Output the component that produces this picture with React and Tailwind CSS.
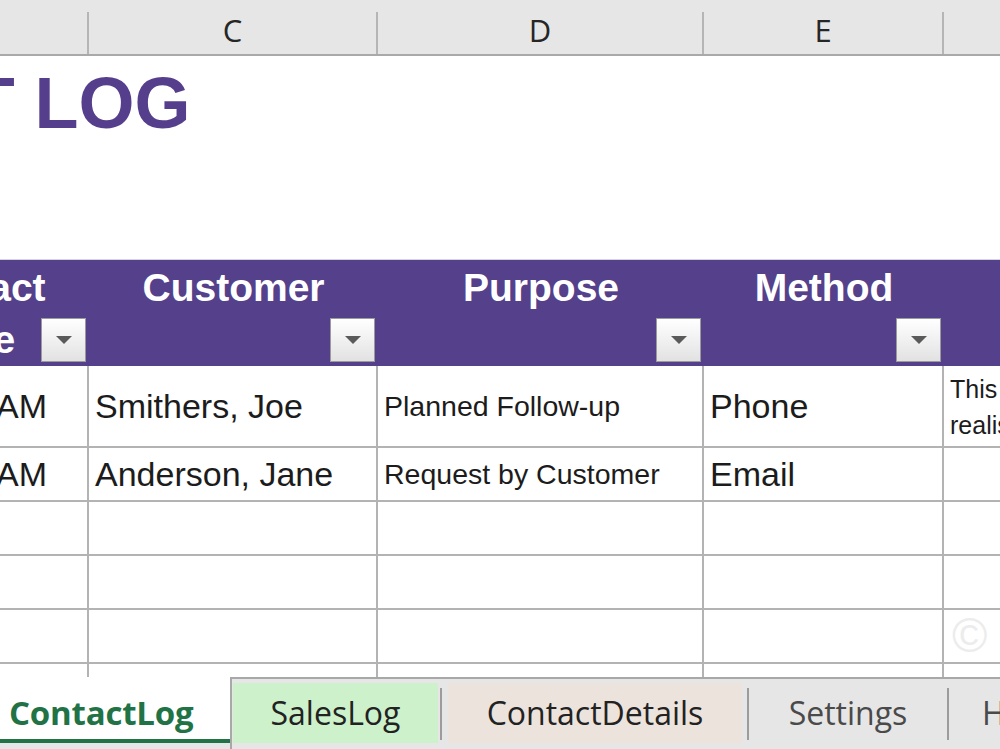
import React from 'react';

const columns = [
  { letter: 'B', width: 'w-[202px] ml-[-113px]', title: ['Contact', 'Date'], pad: 'pr-[30px]' },
  { letter: 'C', width: 'w-[289px]', title: ['Customer', ''], pad: '' },
  { letter: 'D', width: 'w-[326px]', title: ['Purpose', ''], pad: '' },
  { letter: 'E', width: 'w-[240px]', title: ['Method', ''], pad: '' },
  { letter: 'F', width: 'w-[300px]', title: ['Notes', ''], pad: '', noFilter: true },
];

const rows = [
  { h: 'h-[82px]', time: '10:00 AM', customer: 'Smithers, Joe', purpose: 'Planned Follow-up', method: 'Phone', notes: true },
  { h: 'h-[54px]', time: '11:30 AM', customer: 'Anderson, Jane', purpose: 'Request by Customer', method: 'Email' },
  { h: 'h-[54px]' },
  { h: 'h-[54px]' },
  { h: 'h-[54px]', mark: true },
  { h: 'h-[54px]' },
];

const FilterButton = () => (
  <div className="absolute right-[3px] bottom-[4px] w-[45px] h-[44px] border border-[#9b9b9b] bg-gradient-to-b from-white to-[#e2e2e2] flex items-center justify-center">
    <svg width="18" height="10" viewBox="0 0 18 10">
      <polygon points="1,1 17,1 9,9" fill="#5a5a5a" />
    </svg>
  </div>
);

const cell = 'border-r-2 border-b-2 border-[#b3b3b3] shrink-0 flex items-center overflow-hidden whitespace-nowrap';

export default function App() {
  return (
    <div className="w-[1000px] h-[749px] overflow-hidden bg-white flex flex-col" style={{ fontFamily: '"Liberation Sans", Arial, sans-serif' }}>
      {/* column letters */}
      <div className="h-[56px] shrink-0 bg-[#e6e6e6] border-b-2 border-[#a9a9a9] flex items-end">
        {columns.map((c) => (
          <div
            key={c.letter}
            className={`${c.width} h-[42px] shrink-0 border-r-2 border-[#b5b5b5] flex items-start justify-center`}
          >
            {c.letter !== 'B' && (
              <span className="text-[31px] leading-[40px] text-[#262626] -mt-[2px]" style={{ fontFamily: '"Open Sans", sans-serif' }}>
                {c.letter}
              </span>
            )}
          </div>
        ))}
      </div>

      {/* sheet */}
      <div className="flex-1 overflow-hidden flex flex-col">
        <div className="h-[203px] shrink-0">
          <div className="ml-[-332px] mt-[11px] whitespace-nowrap text-[72px] leading-none font-bold text-[#553f8c]">
            CONTACT LOG
          </div>
        </div>

        {/* table header */}
        <div className="h-[107px] shrink-0 flex bg-[#55408b] border-t border-[#d8d2e6]">
          {columns.map((c) => (
            <div key={c.letter} className={`${c.width} shrink-0 relative`}>
              <div className={`flex flex-col items-center pt-[2px] text-[39px] leading-[52px] font-bold text-white whitespace-nowrap ${c.pad}`}>
                <span>{c.title[0]}</span>
                <span>{c.title[1]}</span>
              </div>
              {!c.noFilter && <FilterButton />}
            </div>
          ))}
        </div>

        {/* data rows */}
        {rows.map((r, i) => (
          <div key={i} className={`${r.h} shrink-0 flex text-[#1c1c1c]`}>
            <div className={`${cell} w-[202px] ml-[-113px] justify-end pr-[40px] text-[34px]`}>{r.time}</div>
            <div className={`${cell} w-[289px] pl-[6px] text-[34px]`}>{r.customer}</div>
            <div className={`${cell} w-[326px] pl-[6px] text-[28.5px]`}>{r.purpose}</div>
            <div className={`${cell} w-[240px] pl-[6px] text-[34px]`}>{r.method}</div>
            <div className={`border-b-2 border-[#b3b3b3] w-[300px] shrink-0 overflow-hidden pl-[6px]`}>
              {r.notes && (
                <div className="pt-[5px] text-[25px] leading-[36px] whitespace-nowrap">
                  <div>This is an example note,</div>
                  <div>realistic text goes here</div>
                </div>
              )}
              {r.mark && (
                <div className="h-full flex items-center pl-[2px] text-[48px] text-[#ececec]">©</div>
              )}
            </div>
          </div>
        ))}
      </div>

      {/* sheet tabs */}
      <div className="h-[72px] shrink-0 bg-[#e6e6e6] flex items-start" style={{ fontFamily: '"Open Sans", sans-serif' }}>
        <div className="w-[232px] h-[66px] shrink-0 bg-white border-b-4 border-[#217346] flex items-center pt-[10px] pl-[9px] text-[33px] font-bold text-[#217346] tracking-[-0.2px]">
          ContactLog
        </div>
        <div className="flex-1 h-full border-t-2 border-l-2 border-[#a8a8a8] -ml-[2px] flex items-start pt-[4px] text-[32px]">
          <div className="w-[205px] h-[60px] shrink-0 ml-[1px] bg-[#cdf1cb] flex items-center justify-center text-[#222]">SalesLog</div>
          <div className="w-[2px] h-[52px] mt-[5px] ml-[2px] bg-[#9c9c9c] shrink-0" />
          <div className="w-[294px] h-[60px] shrink-0 ml-[6px] bg-[#ece3dc] flex items-center justify-center text-[#222]">ContactDetails</div>
          <div className="w-[2px] h-[52px] mt-[5px] ml-[5px] bg-[#9c9c9c] shrink-0" />
          <div className="w-[198px] h-[60px] shrink-0 flex items-center justify-center text-[#4a4a4a]">Settings</div>
          <div className="w-[2px] h-[52px] mt-[5px] bg-[#9c9c9c] shrink-0" />
          <div className="h-[60px] shrink-0 pl-[33px] flex items-center text-[#4a4a4a]">Help</div>
        </div>
      </div>
    </div>
  );
}
